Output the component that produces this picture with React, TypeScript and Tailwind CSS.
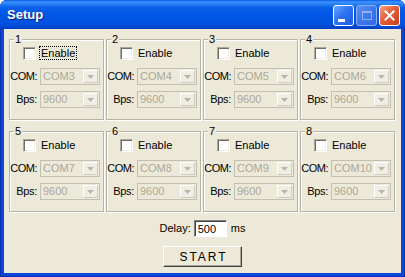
import React from "react";

const ports = [
  { n: 1, com: "COM3" },
  { n: 2, com: "COM4" },
  { n: 3, com: "COM5" },
  { n: 4, com: "COM6" },
  { n: 5, com: "COM7" },
  { n: 6, com: "COM8" },
  { n: 7, com: "COM9" },
  { n: 8, com: "COM10" },
];

function Combo({ value }: { value: string }) {
  return (
    <div className="flex h-[17px] w-[60px] border border-[#c3c0b2] bg-[#ece9d8]">
      <div className="flex-1 pl-[2px] text-[11px] leading-[15px] text-[#aca899]">{value}</div>
      <div className="m-px flex w-[15px] items-center justify-center border border-t-white border-l-white border-r-[#cfccbf] border-b-[#cfccbf] bg-[#f0eee4]">
        <svg width="7" height="4" viewBox="0 0 7 4">
          <polygon points="0,0 7,0 3.5,4" fill="#b9b6a8" />
        </svg>
      </div>
    </div>
  );
}

function Port({ n, com }: { n: number; com: string }) {
  return (
    <fieldset className="border border-[#b7b4a6] pb-[11px] shadow-[inset_1px_1px_0_#fff,1px_1px_0_#fff]">
      <legend className="ml-[4px] bg-[#ece9d8] px-px text-[11px] leading-[13px] text-black">{n}</legend>
      <div className="flex h-[14px] items-center gap-[3px] pl-[13px]">
        <div className="h-[13px] w-[13px] border border-t-[#aca899] border-l-[#aca899] border-r-white border-b-white bg-white shadow-[inset_1px_1px_0_#716f64,inset_-1px_-1px_0_#f1efe2]" />
        <span
          className={
            "px-px text-[11px] leading-[12px] text-black border border-dotted " +
            (n === 1 ? "border-black" : "border-transparent")
          }
        >
          Enable
        </span>
      </div>
      <div className="mt-[8px] flex items-center gap-[3px]">
        <span className="w-[27px] text-right text-[11px] tracking-[-0.5px] text-black">COM:</span>
        <Combo value={com} />
      </div>
      <div className="mt-[6px] flex items-center gap-[3px]">
        <span className="w-[27px] text-right text-[11px] tracking-[-0.3px] text-black">Bps:</span>
        <Combo value="9600" />
      </div>
    </fieldset>
  );
}

export default function App() {
  return (
    <div className="h-[277px] w-[405px] bg-white font-['Liberation_Sans',Arial,sans-serif]">
      <div className="flex h-full flex-col overflow-hidden rounded-t-[7px] bg-[#0846dc] shadow-[inset_0_0_0_1px_#0a2fb0]">
        {/* title bar */}
        <div className="flex h-[29px] shrink-0 items-center bg-[linear-gradient(to_bottom,#0a5ae8_0%,#3d95ff_7%,#2a82f6_13%,#0a60e8_26%,#0056e6_50%,#0053e0_80%,#0048d4_92%,#003ec2_100%)] pl-[7px] pr-[5px]">
          <span className="flex-1 text-[13px] font-bold text-white [text-shadow:1px_1px_0_#0a1e8f]">Setup</span>
          <div className="mt-[2px] flex gap-[2px]">
            <div className="relative h-[21px] w-[21px] rounded-[3px] border border-white bg-[linear-gradient(135deg,#6aa6ff_0%,#2f74f2_45%,#1c58e2_100%)]">
              <div className="absolute left-[4px] top-[13px] h-[3px] w-[7px] bg-white" />
            </div>
            <div className="flex h-[21px] w-[21px] items-center justify-center rounded-[3px] border border-[#8fb0f0] bg-[linear-gradient(135deg,#5e93f6_0%,#3c78ee_50%,#2f68e6_100%)]">
              <div className="h-[9px] w-[10px] border border-t-2 border-[#8fb2f2]" />
            </div>
            <div className="flex h-[21px] w-[21px] items-center justify-center rounded-[3px] border border-white bg-[linear-gradient(135deg,#f5a283_0%,#e4603a_45%,#c93c16_100%)]">
              <svg width="11" height="11" viewBox="0 0 11 11">
                <path d="M1.5 1.5 L9.5 9.5 M9.5 1.5 L1.5 9.5" stroke="#fff" strokeWidth="2" strokeLinecap="square" />
              </svg>
            </div>
          </div>
        </div>

        {/* client area */}
        <div className="mx-[4px] mb-[4px] flex flex-1 flex-col bg-[#ece9d8] pt-[4px]">
          <div className="grid grid-cols-[repeat(4,95px)] gap-x-[2px] gap-y-[5px] pl-[5px]">
            {ports.map((p) => (
              <Port key={p.n} n={p.n} com={p.com} />
            ))}
          </div>

          <div className="mt-[8px] flex items-center justify-center text-[11px] text-black">
            <span>Delay:</span>
            <input
              readOnly
              defaultValue="500"
              className="ml-[3px] h-[17px] w-[33px] border border-t-[#808080] border-l-[#808080] border-r-white border-b-white bg-white pl-[3px] text-[11px] text-black outline-none shadow-[inset_1px_1px_0_#404040]"
            />
            <span className="ml-[4px]">ms</span>
          </div>

          <div className="mt-[9px] flex justify-center">
            <button className="h-[21px] w-[79px] border border-t-white border-l-white border-r-[#404040] border-b-[#404040] bg-[#ece9d8] pl-[2px] text-[12px] tracking-[2px] text-black shadow-[inset_-1px_-1px_0_#aca899]">
              START
            </button>
          </div>
        </div>
      </div>
    </div>
  );
}
